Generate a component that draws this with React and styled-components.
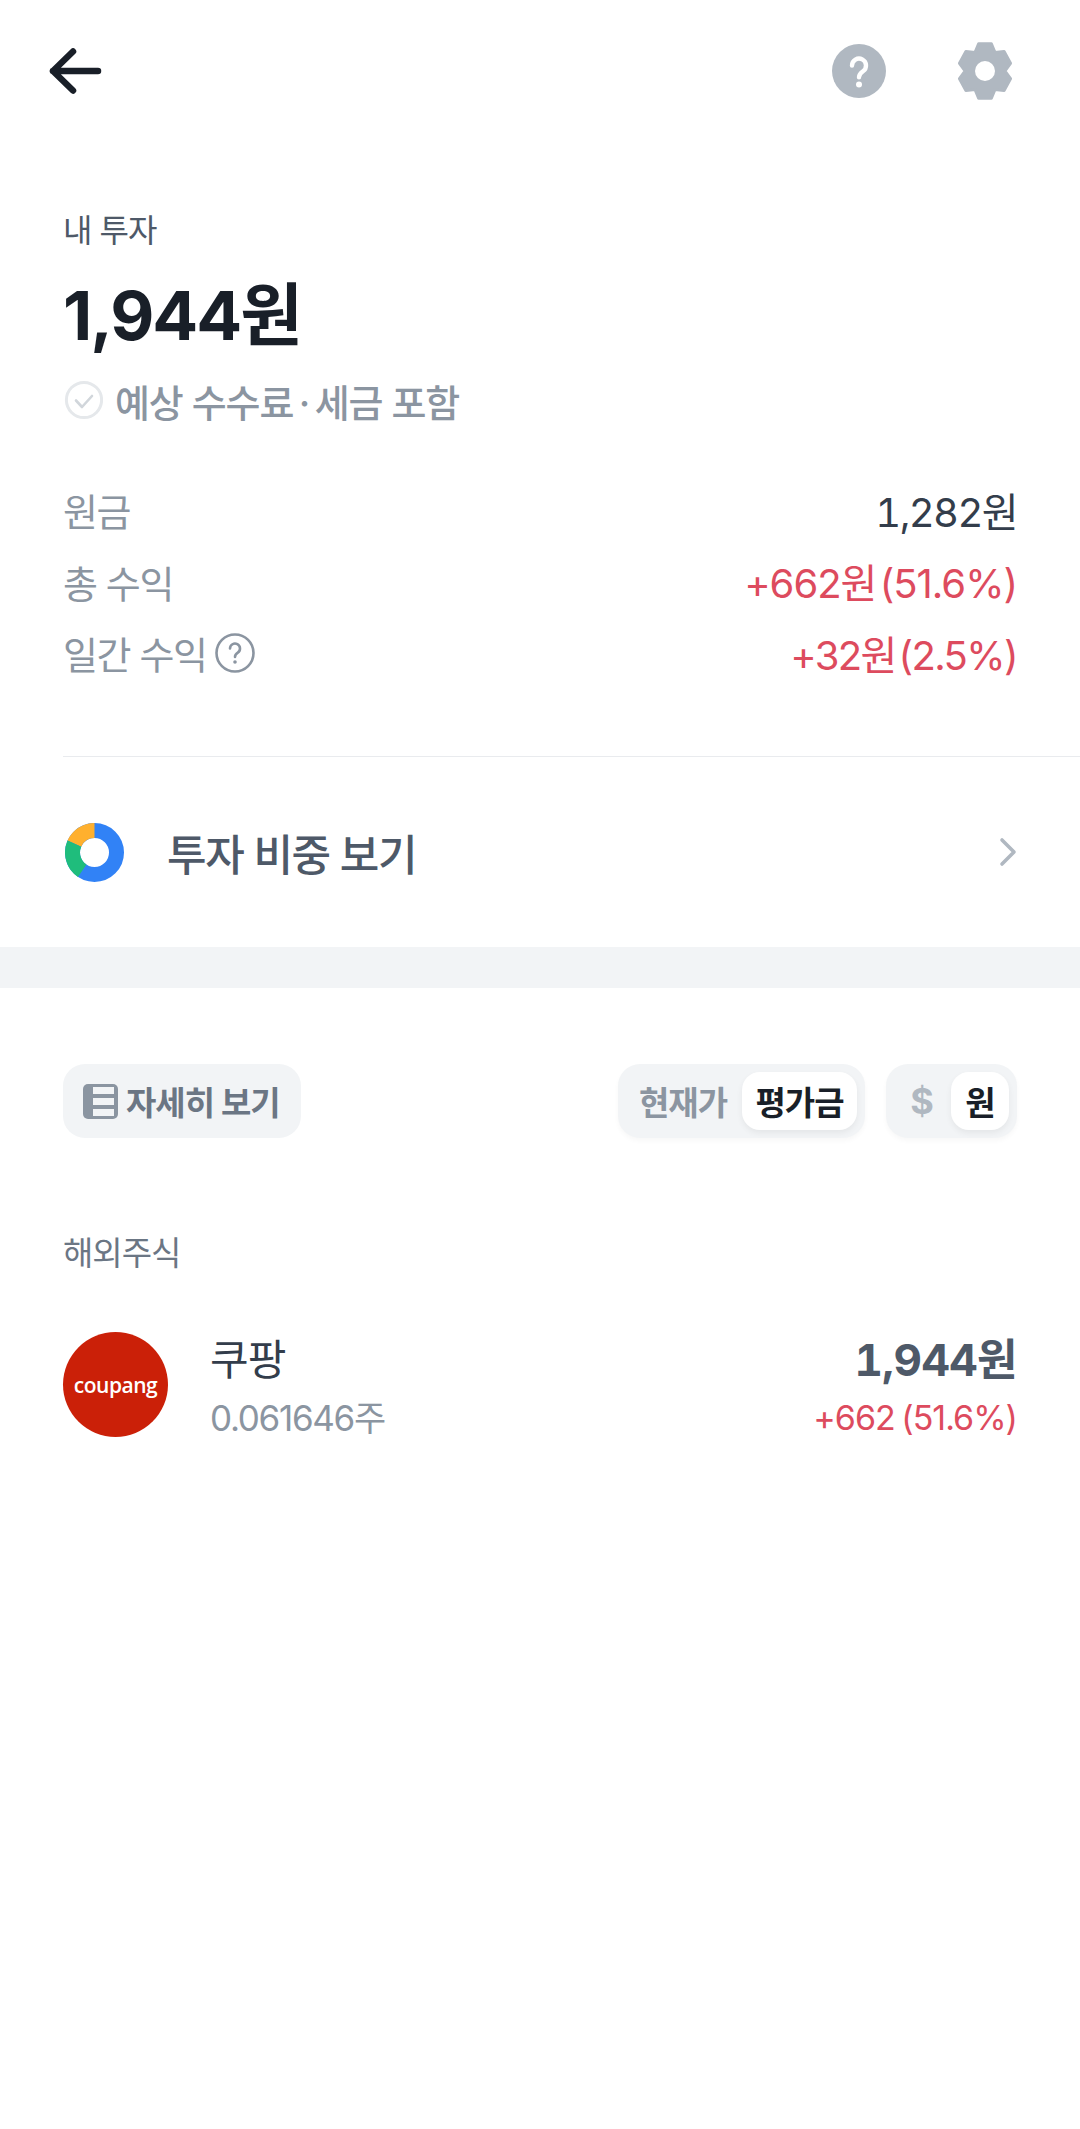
import React from "react";
import styled, { createGlobalStyle } from "styled-components";

const GlobalStyle = createGlobalStyle`
  html, body {
    margin: 0;
    padding: 0;
    background: #fff;
  }
  body {
    font-family: "Inter", "Noto Sans CJK KR", sans-serif;
    color: #191f28;
  }
`;

const Page = styled.div`
  width: 1080px;
  min-height: 2129px;
  background: #fff;
`;

const Header = styled.header`
  height: 142px;
  padding: 0 68px 0 48px;
  display: flex;
  align-items: center;
  justify-content: space-between;
`;
const HeaderIcons = styled.div`
  display: flex;
  align-items: center;
  gap: 72px;
`;

const Summary = styled.section`
  padding: 67px 63px 0;
`;
const Label = styled.div`
  height: 44px;
  font-size: 32px;
  line-height: 44px;
  color: #4e5968;
  letter-spacing: -1px;
`;
const Total = styled.div`
  height: 84px;
  margin-top: 20px;
  font-size: 68px;
  font-weight: 700;
  line-height: 84px;
  letter-spacing: -2px;
  color: #191f28;
`;
const Note = styled.div`
  height: 50px;
  margin-top: 18px;
  display: flex;
  align-items: center;
  gap: 12px;
  font-size: 38px;
  font-weight: 500;
  color: #8b95a1;
  letter-spacing: -1.1px;
`;
const Rows = styled.div`
  margin-top: 49px;
`;
const Row = styled.div`
  height: 71.5px;
  display: flex;
  align-items: center;
  justify-content: space-between;
  font-size: 40px;
  letter-spacing: -1px;
`;
const RowName = styled.span`
  display: flex;
  align-items: center;
  gap: 8px;
  font-size: 38px;
  letter-spacing: -1.4px;
  color: #8b95a1;
`;
const RowValue = styled.span`
  letter-spacing: ${(p) => p.$track ?? -1}px;
  word-spacing: -7px;
  color: ${(p) => (p.$red ? "#dd4b5e" : "#333d4b")};
`;
const PrincipalValue = styled.span`
  font-variant-numeric: tabular-nums;
  letter-spacing: -1.6px;
  color: #333d4b;
`;

const Divider = styled.div`
  height: 1px;
  margin: 67.5px 0 0 63px;
  background: #e9ebee;
`;

const LinkRow = styled.div`
  height: 190px;
  padding: 0 63px 0 65px;
  display: flex;
  align-items: center;
`;
const LinkText = styled.span`
  margin-left: 43px;
  flex: 1;
  font-size: 43px;
  font-weight: 500;
  letter-spacing: -1.4px;
  color: #4e5968;
`;

const Band = styled.div`
  height: 41px;
  background: #f2f4f6;
`;

const Toolbar = styled.div`
  margin-top: 76px;
  padding: 0 63px;
  display: flex;
  align-items: center;
`;
const DetailButton = styled.div`
  width: 238px;
  height: 74px;
  padding-left: 20px;
  box-sizing: border-box;
  flex-shrink: 0;
  display: flex;
  align-items: center;
  gap: 8px;
  border-radius: 22px;
  background: #f2f4f6;
  font-size: 33px;
  font-weight: 700;
  letter-spacing: -1px;
  color: #6b7684;
`;
const Toggle = styled.div`
  height: 74px;
  margin-left: ${(p) => p.$gap}px;
  padding: 0 8px 0 0;
  box-sizing: border-box;
  display: flex;
  align-items: center;
  border-radius: 22px;
  background: #f2f4f6;
  box-shadow: 0 3px 5px rgba(0, 0, 0, 0.03);
`;
const ToggleOff = styled.span`
  width: ${(p) => p.$w}px;
  padding-left: 6px;
  box-sizing: border-box;
  text-align: center;
  font-size: ${(p) => p.$size || 33}px;
  font-weight: 700;
  letter-spacing: -1px;
  color: ${(p) => p.$color || "#8b95a1"};
`;
const ToggleOn = styled.span`
  width: ${(p) => p.$w}px;
  height: 58px;
  display: flex;
  align-items: center;
  justify-content: center;
  border-radius: 18px;
  background: #fff;
  box-shadow: 0 3px 6px rgba(0, 0, 0, 0.06);
  font-size: 33px;
  font-weight: 700;
  letter-spacing: -1px;
  color: #191f28;
`;

const SectionLabel = styled.div`
  height: 44px;
  margin-top: 93px;
  padding-left: 63px;
  font-size: 33px;
  line-height: 44px;
  letter-spacing: -1px;
  color: #6b7684;
`;

const Stock = styled.div`
  margin-top: 56px;
  padding: 0 63px;
  display: flex;
  align-items: flex-start;
`;
const Logo = styled.div`
  width: 105px;
  height: 105px;
  margin-top: 1px;
  display: flex;
  align-items: center;
  justify-content: center;
  border-radius: 50%;
  background: #cb2008;
  font-family: "Open Sans", sans-serif;
  font-size: 21px;
  font-weight: 600;
  color: #fff;
  letter-spacing: -0.5px;
`;
const StockInfo = styled.div`
  margin-left: 42px;
  flex: 1;
`;
const StockName = styled.div`
  height: 58px;
  font-size: 42px;
  line-height: 58px;
  letter-spacing: -1px;
  color: #333d4b;
`;
const StockQty = styled.div`
  height: 58px;
  font-size: 35px;
  line-height: 58px;
  letter-spacing: -1.3px;
  color: #8b95a1;
`;
const StockValues = styled.div`
  text-align: right;
`;
const StockPrice = styled.div`
  height: 58px;
  font-size: 44px;
  font-weight: 700;
  line-height: 58px;
  letter-spacing: -0.6px;
  font-variant-numeric: tabular-nums;
  color: #4e5968;
`;
const StockGain = styled.div`
  height: 58px;
  font-size: 34px;
  line-height: 58px;
  letter-spacing: -1px;
  word-spacing: -2px;
  color: #dd4b5e;
`;

// gear outline, six round teeth around the centre of a 54x58 box
const gearPoints = [0, 1, 2, 3, 4, 5]
  .flatMap((k) =>
    [
      [-30, 20],
      [-14, 26.5],
      [14, 26.5],
      [30, 20],
    ].map(([deg, r]) => {
      const a = ((k * 60 + deg - 90) * Math.PI) / 180;
      return `${(27 + r * Math.cos(a)).toFixed(1)},${(29 + r * 1.06 * Math.sin(a)).toFixed(1)}`;
    })
  )
  .join(" ");

const BackIcon = () => (
  <svg width="54" height="46" viewBox="0 0 54 46" fill="none" stroke="#191f28" strokeWidth="6.5" strokeLinecap="round" strokeLinejoin="round">
    <path d="M50 23H5M25 3.5L5 23L25 42.5" />
  </svg>
);

const HelpIcon = () => (
  <svg width="54" height="54" viewBox="0 0 54 54">
    <circle cx="27" cy="27" r="27" fill="#b0b8c1" />
    <path d="M20 21.5a7 7 0 1 1 11 5.8c-2.6 1.8-4 2.8-4 6" fill="none" stroke="#fff" strokeWidth="4.4" strokeLinecap="round" />
    <circle cx="27" cy="40.5" r="3" fill="#fff" />
  </svg>
);

const GearIcon = () => (
  <svg width="54" height="58" viewBox="0 0 54 58">
    <polygon points={gearPoints} fill="#b0b8c1" stroke="#b0b8c1" strokeWidth="3" strokeLinejoin="round" />
    <circle cx="27" cy="29" r="10" fill="#fff" />
  </svg>
);

const CheckIcon = () => (
  <svg width="40" height="40" viewBox="0 0 40 40" fill="none">
    <circle cx="21" cy="20" r="17.6" stroke="#e5e8eb" strokeWidth="3" />
    <path d="M13 20.5l6 6.5l10-11" stroke="#d1d6db" strokeWidth="2.6" strokeLinecap="round" strokeLinejoin="round" />
  </svg>
);

const SmallHelpIcon = () => (
  <svg width="40" height="40" viewBox="0 0 40 40" fill="none">
    <circle cx="20" cy="20" r="18.5" stroke="#8b95a1" strokeWidth="2.6" />
    <path d="M15 15.5a5 5 0 1 1 7.8 4.2c-1.8 1.2-2.8 2-2.8 4.3" stroke="#8b95a1" strokeWidth="2.6" strokeLinecap="round" />
    <circle cx="20" cy="29" r="1.8" fill="#8b95a1" />
  </svg>
);

const Donut = () => (
  <svg width="59" height="59" viewBox="0 0 59 59" fill="none" strokeWidth="15">
    <circle cx="29.5" cy="29.5" r="22" stroke="#3182f6" />
    <path d="M29.5 7.5A22 22 0 0 0 9.4 20.6" stroke="#ffb02e" />
    <path d="M9.4 20.6A22 22 0 0 0 17.2 47.7" stroke="#1fbd7c" />
  </svg>
);

const Chevron = () => (
  <svg width="18" height="30" viewBox="0 0 18 30" fill="none">
    <path d="M3 3L15 15L3 27" stroke="#b0b8c1" strokeWidth="3.6" strokeLinecap="round" strokeLinejoin="round" />
  </svg>
);

const ListIcon = () => (
  <svg width="35" height="35" viewBox="0 0 35 35">
    <rect width="35" height="35" rx="5" fill="#8b95a1" />
    <rect x="10" y="3" width="21" height="7" fill="#f2f4f6" />
    <rect x="10" y="14" width="21" height="7" fill="#f2f4f6" />
    <rect x="10" y="25" width="21" height="7" fill="#f2f4f6" />
  </svg>
);

function App() {
  return (
    <Page>
      <GlobalStyle />
      <Header>
        <BackIcon />
        <HeaderIcons>
          <HelpIcon />
          <GearIcon />
        </HeaderIcons>
      </Header>

      <Summary>
        <Label>내 투자</Label>
        <Total>1,944원</Total>
        <Note>
          <CheckIcon />
          {"예상 수수료\u2009·\u2009세금 포함"}
        </Note>
        <Rows>
          <Row>
            <RowName>원금</RowName>
            <PrincipalValue>1,282원</PrincipalValue>
          </Row>
          <Row>
            <RowName>총 수익</RowName>
            <RowValue $red>+662원 (51.6%)</RowValue>
          </Row>
          <Row>
            <RowName>
              일간 수익
              <SmallHelpIcon />
            </RowName>
            <RowValue $red $track={-1.6}>+32원 (2.5%)</RowValue>
          </Row>
        </Rows>
      </Summary>
      <Divider />

      <LinkRow>
        <Donut />
        <LinkText>투자 비중 보기</LinkText>
        <Chevron />
      </LinkRow>
      <Band />

      <Toolbar>
        <DetailButton>
          <ListIcon />
          자세히 보기
        </DetailButton>
        <Toggle $gap={317}>
          <ToggleOff $w={124}>현재가</ToggleOff>
          <ToggleOn $w={115}>평가금</ToggleOn>
        </Toggle>
        <Toggle $gap={21}>
          <ToggleOff $w={65} $size={36} $color="#b0b8c1">$</ToggleOff>
          <ToggleOn $w={58}>원</ToggleOn>
        </Toggle>
      </Toolbar>

      <SectionLabel>해외주식</SectionLabel>

      <Stock>
        <Logo>coupang</Logo>
        <StockInfo>
          <StockName>쿠팡</StockName>
          <StockQty>0.061646주</StockQty>
        </StockInfo>
        <StockValues>
          <StockPrice>1,944원</StockPrice>
          <StockGain>+662 (51.6%)</StockGain>
        </StockValues>
      </Stock>
    </Page>
  );
}

export default App;
